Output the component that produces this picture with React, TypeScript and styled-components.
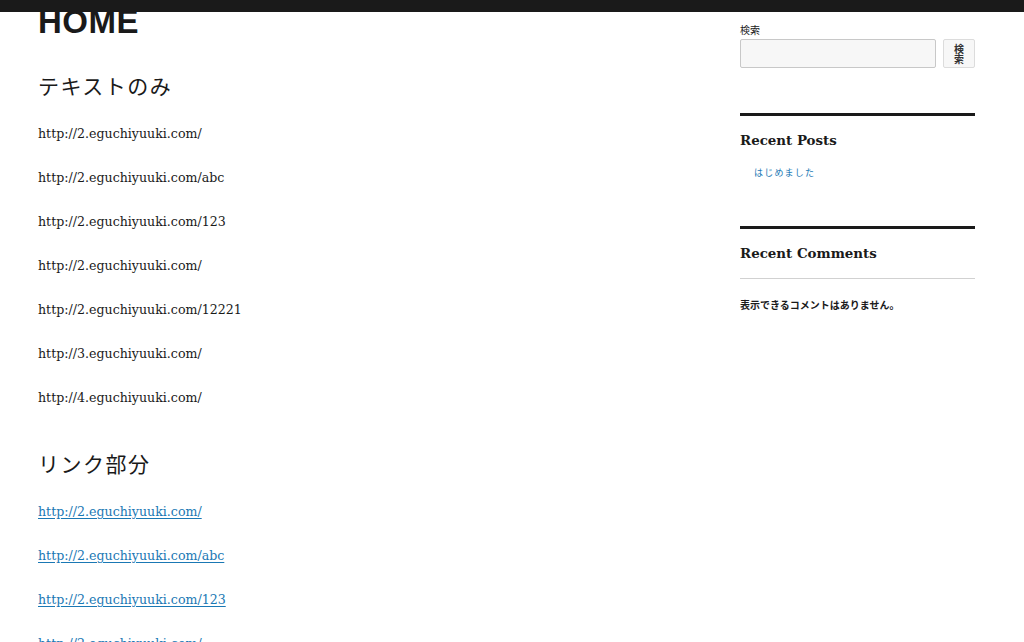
import styled, { createGlobalStyle } from "styled-components";

const GlobalStyle = createGlobalStyle`
  body {
    margin: 0;
    background: #fff;
    color: #1a1a1a;
  }
`;

const AdminBar = styled.div`
  position: fixed;
  top: 0;
  left: 0;
  right: 0;
  height: 12px;
  background: #1a1a1a;
  z-index: 10;
`;

const Page = styled.div`
  display: flex;
  align-items: flex-start;
  padding-left: 38px;
`;

const Main = styled.main`
  width: 640px;
  padding-top: 5px;
`;

const PageTitle = styled.h1`
  margin: 0;
  font-family: "Liberation Sans", Arial, sans-serif;
  font-weight: 700;
  font-size: 33px;
  line-height: 1;
  letter-spacing: 0.5px;
  color: #1a1a1a;
`;

const SectionTitle = styled.h2<{ $first?: boolean }>`
  margin: ${(p) => (p.$first ? "32px" : "39px")} 0 22px;
  font-family: "Noto Sans CJK JP", sans-serif;
  font-weight: 400;
  font-size: 21px;
  line-height: 31px;
  letter-spacing: 1.5px;
  color: #1a1a1a;
`;

const Para = styled.p`
  margin: 0 0 22px;
  font-family: "DejaVu Serif", serif;
  font-size: 12.6px;
  line-height: 22px;
  color: #1a1a1a;
`;

const Link = styled.a`
  color: #1a78b4;
  text-decoration: underline;
  text-underline-offset: 2px;
`;

const Sidebar = styled.aside`
  width: 235px;
  margin-left: 62px;
  padding-top: 23px;
  font-family: "Noto Sans CJK JP", sans-serif;
`;

const Label = styled.div`
  font-size: 10px;
  line-height: 14px;
  margin-bottom: 2px;
  color: #1a1a1a;
`;

const SearchRow = styled.div`
  display: flex;
  gap: 7px;
`;

const SearchInput = styled.input`
  box-sizing: border-box;
  width: 196px;
  height: 29px;
  background: #f7f7f7;
  border: 1px solid #c8c8c8;
  border-radius: 2px;
  padding: 0 6px;
`;

const SearchButton = styled.button`
  box-sizing: border-box;
  width: 32px;
  height: 29px;
  padding: 0 8px;
  background: #f7f7f7;
  border: 1px solid #dcdcdc;
  border-radius: 2px;
  font-family: "Noto Sans CJK JP", sans-serif;
  font-size: 10px;
  line-height: 10px;
  font-weight: 700;
  color: #333;
`;

const Widget = styled.section<{ $gap: number }>`
  margin-top: ${(p) => p.$gap}px;
  border-top: 3px solid #1a1a1a;
`;

const WidgetTitle = styled.h2<{ $divider?: boolean }>`
  margin: 15px 0 0;
  font-family: "DejaVu Serif", serif;
  font-weight: 700;
  font-size: 13.4px;
  line-height: 18px;
  color: #1a1a1a;
  ${(p) => (p.$divider ? "padding-bottom: 16px; border-bottom: 1px solid #d1d1d1;" : "")}
`;

const PostLink = styled.a`
  display: block;
  margin: 17px 0 0 14px;
  font-size: 9px;
  line-height: 14px;
  letter-spacing: 1.2px;
  color: #1a78b4;
  text-decoration: none;
`;

const Empty = styled.p`
  margin: 19px 0 0;
  font-size: 10px;
  line-height: 14px;
  font-weight: 700;
  color: #1a1a1a;
`;

const plain = [
  "http://2.eguchiyuuki.com/",
  "http://2.eguchiyuuki.com/abc",
  "http://2.eguchiyuuki.com/123",
  "http://2.eguchiyuuki.com/",
  "http://2.eguchiyuuki.com/12221",
  "http://3.eguchiyuuki.com/",
  "http://4.eguchiyuuki.com/",
];

const links = [
  "http://2.eguchiyuuki.com/",
  "http://2.eguchiyuuki.com/abc",
  "http://2.eguchiyuuki.com/123",
  "http://2.eguchiyuuki.com/",
];

export default function App() {
  return (
    <>
      <GlobalStyle />
      <AdminBar />
      <Page>
        <Main>
          <PageTitle>HOME</PageTitle>
          <SectionTitle $first>テキストのみ</SectionTitle>
          {plain.map((t, i) => (
            <Para key={i}>{t}</Para>
          ))}
          <SectionTitle>リンク部分</SectionTitle>
          {links.map((t, i) => (
            <Para key={i}>
              <Link href="#">{t}</Link>
            </Para>
          ))}
        </Main>
        <Sidebar>
          <Label>検索</Label>
          <SearchRow>
            <SearchInput type="search" />
            <SearchButton>検索</SearchButton>
          </SearchRow>
          <Widget $gap={45}>
            <WidgetTitle>Recent Posts</WidgetTitle>
            <PostLink href="#">はじめました</PostLink>
          </Widget>
          <Widget $gap={46}>
            <WidgetTitle $divider>Recent Comments</WidgetTitle>
            <Empty>表示できるコメントはありません。</Empty>
          </Widget>
        </Sidebar>
      </Page>
    </>
  );
}
